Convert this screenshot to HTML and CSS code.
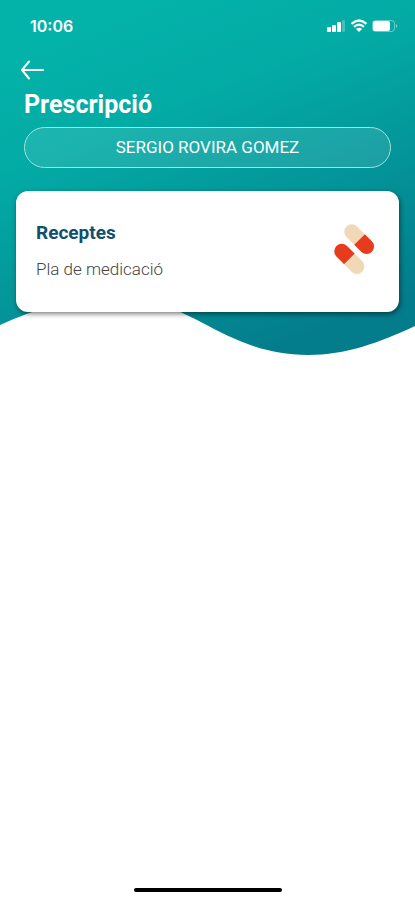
FILE: index.html
```
<!DOCTYPE html>
<html lang="ca">
<head>
  <meta charset="utf-8">
  <meta name="viewport" content="width=device-width, initial-scale=1">
  <title>Prescripció</title>
  <link rel="stylesheet" href="styles.css">
</head>
<body>
  <div class="hero">
    <svg class="wave" viewBox="0 0 415 355" preserveAspectRatio="none" aria-hidden="true">
      <defs>
        <linearGradient id="teal" gradientUnits="userSpaceOnUse" x1="130" y1="0" x2="270" y2="355">
          <stop offset="0" stop-color="#03b3aa"/>
          <stop offset="0.3" stop-color="#03aba5"/>
          <stop offset="0.65" stop-color="#039499"/>
          <stop offset="1" stop-color="#037c8b"/>
        </linearGradient>
      </defs>
      <path fill="url(#teal)" d="M0 0H415V326C378 343 346 355 308 355C236 355 200 312 150 302C90 292 50 303 0 325Z"/>
    </svg>
    <div class="content">
      <div class="status">
        <span class="time">10:06</span>
        <svg class="status-icons" width="72" height="16" viewBox="0 0 72 16" fill="#fff" aria-hidden="true">
          <rect x="0" y="9" width="4" height="5" rx="1"/>
          <rect x="5" y="7" width="4" height="7" rx="1"/>
          <rect x="10" y="4" width="4" height="10" rx="1"/>
          <rect x="15" y="2" width="3" height="12" rx="1" opacity="0.25"/>
          <path d="M32 14L29 11Q32 8.500 35 11Z"/>
          <path fill="none" stroke="#fff" stroke-width="2.200" d="M24.500 5.800Q32 -0.800 39.500 5.800M27 8.800Q32 4.400 37 8.800"/>
          <rect x="45.500" y="2.500" width="22" height="11" rx="3" fill="none" stroke="#fff" opacity="0.4"/>
          <rect x="46" y="3" width="17" height="10" rx="2"/>
          <path d="M69 6Q71.500 8 69 10Z" opacity="0.5"/>
        </svg>
      </div>
      <button class="back" type="button" aria-label="Enrere">
        <svg width="24" height="20" viewBox="0 0 24 20" fill="none" stroke="#fff" stroke-width="2" stroke-linecap="round" stroke-linejoin="round">
          <path d="M23 10H2M9 1.500L2 10L9 18.500"/>
        </svg>
      </button>
      <h1 class="title">Prescripció</h1>
      <button class="patient" type="button">SERGIO ROVIRA GOMEZ</button>
      <a class="card" href="#">
        <span class="card-text">
          <strong class="card-title">Receptes</strong>
          <span class="card-sub">Pla de medicació</span>
        </span>
        <svg class="pills" width="42" height="54" viewBox="0 0 42 54" aria-hidden="true">
          <g transform="translate(26.500 18.500) rotate(45)">
            <path fill="#f1d9b7" d="M0 -7.500H-11A7.500 7.500 0 0 0 -11 7.500H0Z"/>
            <path fill="#e63b1c" d="M0 -7.500H10A7.500 7.500 0 0 1 10 7.500H0Z"/>
          </g>
          <g transform="translate(16.500 38) rotate(45)">
            <path fill="#e63b1c" d="M0 -7.500H-11A7.500 7.500 0 0 0 -11 7.500H0Z"/>
            <path fill="#f1d9b7" d="M0 -7.500H10.500A7.500 7.500 0 0 1 10.500 7.500H0Z"/>
          </g>
        </svg>
      </a>
    </div>
  </div>
  <div class="home-bar"></div>
</body>
</html>
```
FILE: styles.css
```
* {
  box-sizing: border-box;
}
body {
  margin: 0;
  min-height: 100vh;
  display: flex;
  flex-direction: column;
  background: #fff;
  font-family: Roboto, sans-serif;
}
/* wave and content share one grid cell */
.hero {
  display: grid;
}
.wave {
  grid-area: 1 / 1;
  width: 100%;
  height: 355px;
}
.content {
  grid-area: 1 / 1;
  display: flex;
  flex-direction: column;
  padding: 16px 16px 0;
  z-index: 1;
}
.status {
  display: flex;
  justify-content: space-between;
  align-items: center;
  height: 20px;
  padding-left: 14px;
}
.time {
  color: #fff;
  font: 600 16px/20px Inter, sans-serif;
}
.back {
  align-self: flex-start;
  display: flex;
  margin: 24px 0 0 4px;
  padding: 0;
  border: 0;
  background: none;
  cursor: pointer;
}
.title {
  margin: 9px 8px 0;
  color: #fff;
  font-size: 25px;
  line-height: 32px;
  font-weight: 700;
}
.patient {
  height: 41px;
  margin: 6px 8px 0;
  padding: 0 6px 2px;
  border: 1px solid #a5e0de;
  border-radius: 21px;
  background: rgba(255, 255, 255, 0.1);
  color: #fff;
  font-family: inherit;
  font-size: 17px;
  cursor: pointer;
}
.card {
  display: flex;
  justify-content: space-between;
  align-items: center;
  height: 121px;
  margin-top: 23px;
  padding: 0 24px 2px 20px;
  border-radius: 12px;
  background: #fff;
  box-shadow: 1px 2px 5px rgba(0, 0, 0, 0.5);
  text-decoration: none;
}
.card-text {
  display: flex;
  flex-direction: column;
  gap: 12px;
}
.card-title {
  color: #104f70;
  font-size: 19px;
  line-height: 24px;
}
.card-sub {
  color: #444;
  font-size: 17px;
  font-weight: 300;
  line-height: 24px;
}
.pills {
  margin-bottom: 6px;
}
.home-bar {
  width: 148px;
  height: 4px;
  margin: auto auto 8px;
  border-radius: 2px;
  background: #000;
}
```
